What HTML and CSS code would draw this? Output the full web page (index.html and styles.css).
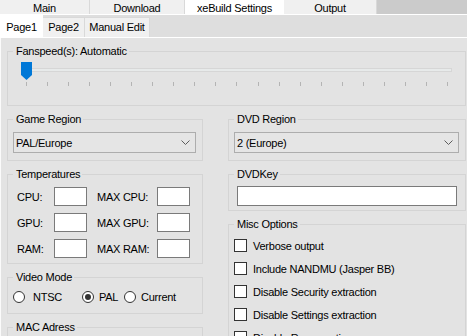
FILE: index.html
```html
<!DOCTYPE html>
<html>
<head>
    <link rel="stylesheet" href="styles.css">
</head>
<body>
    <!-- top tabs -->
    <div class="main-tabs">
        <div class="main-tab tab-main">Main</div>
        <div class="main-tab tab-download">Download</div>
        <div class="main-tab tab-xebuild active">xeBuild Settings</div>
        <div class="main-tab tab-output">Output</div>
    </div>

    <!-- settings pages -->
    <div class="page-tabs">
        <div class="page-tab tab-page1 active">Page1</div>
        <div class="page-tab tab-page2">Page2</div>
        <div class="page-tab tab-manual">Manual Edit</div>
    </div>

    <div class="page">
        <fieldset class="group fan-group">
            <legend>Fanspeed(s): Automatic</legend>
            <div class="slider">
                <div class="slider-track"></div>
                <svg class="slider-thumb" width="11" height="18" viewBox="0 0 11 18">
                    <path d="M0 0 H11 V13 L5.5 18 L0 13 Z" fill="#0078d7"/>
                </svg>
                <div class="slider-ticks">
                    <span></span><span></span><span></span><span></span><span></span><span></span><span></span>
                    <span></span><span></span><span></span><span></span><span></span><span></span><span></span>
                    <span></span><span></span><span></span><span></span><span></span><span></span><span></span>
                </div>
            </div>
        </fieldset>

        <div class="columns">
            <div class="column">
                <fieldset class="group combo-group">
                    <legend>Game Region</legend>
                    <div class="combo">
                        <span>PAL/Europe</span>
                        <svg width="9" height="5" viewBox="0 0 9 5"><polyline points="0.5,0.5 4.5,4.5 8.5,0.5" fill="none" stroke="#5c5c5c"/></svg>
                    </div>
                </fieldset>

                <fieldset class="group temp-group">
                    <legend>Temperatures</legend>
                    <div class="temp-row">
                        <span class="temp-label">CPU:</span><span class="temp-box"></span>
                        <span class="temp-label max">MAX CPU:</span><span class="temp-box"></span>
                    </div>
                    <div class="temp-row">
                        <span class="temp-label">GPU:</span><span class="temp-box"></span>
                        <span class="temp-label max">MAX GPU:</span><span class="temp-box"></span>
                    </div>
                    <div class="temp-row">
                        <span class="temp-label">RAM:</span><span class="temp-box"></span>
                        <span class="temp-label max">MAX RAM:</span><span class="temp-box"></span>
                    </div>
                </fieldset>

                <fieldset class="group video-group">
                    <legend>Video Mode</legend>
                    <div class="radios">
                        <label class="radio radio-ntsc"><span class="radio-dot"></span>NTSC</label>
                        <label class="radio radio-pal"><span class="radio-dot checked"></span>PAL</label>
                        <label class="radio"><span class="radio-dot"></span>Current</label>
                    </div>
                </fieldset>

                <fieldset class="group mac-group">
                    <legend>MAC Adress</legend>
                    <div class="textbox"></div>
                </fieldset>
            </div>

            <div class="column">
                <fieldset class="group combo-group">
                    <legend>DVD Region</legend>
                    <div class="combo">
                        <span>2 (Europe)</span>
                        <svg width="9" height="5" viewBox="0 0 9 5"><polyline points="0.5,0.5 4.5,4.5 8.5,0.5" fill="none" stroke="#5c5c5c"/></svg>
                    </div>
                </fieldset>

                <fieldset class="group key-group">
                    <legend>DVDKey</legend>
                    <div class="textbox key-box"></div>
                </fieldset>

                <fieldset class="group misc-group">
                    <legend>Misc Options</legend>
                    <label class="check"><span class="check-box"></span>Verbose output</label>
                    <label class="check"><span class="check-box"></span>Include NANDMU (Jasper BB)</label>
                    <label class="check"><span class="check-box"></span>Disable Security extraction</label>
                    <label class="check"><span class="check-box"></span>Disable Settings extraction</label>
                    <label class="check"><span class="check-box"></span>Disable Reencryption</label>
                </fieldset>
            </div>
        </div>
    </div>
</body>
</html>
```

FILE: styles.css
```css
* {
    box-sizing: border-box;
}

body {
    margin: 0;
    width: 467px;
    height: 336px;
    overflow: hidden;
    background: #e3e3e3;
    font-family: "Liberation Sans", Arial, sans-serif;
    font-size: 11px;
    letter-spacing: -0.25px;
    color: #000;
}

/* top tabs */
.main-tabs {
    display: flex;
    align-items: flex-start;
    height: 15px;
    background: #cbcbcb;
    border-bottom: 1px solid #fff;
}

.main-tab {
    height: 14px;
    line-height: 16px;
    text-align: center;
    background: #f0f0f0;
    border-right: 1px solid #d9d9d9;
}

.main-tab.active {
    height: 15px;
    margin-bottom: -1px;
    background: #fff;
    border-right: none;
}

.tab-main { width: 90px; }
.tab-download { width: 95px; }
.tab-xebuild { width: 99px; }
.tab-output { width: 93px; }

/* page tabs */
.page-tabs {
    display: flex;
    align-items: flex-start;
    height: 23px;
    background: #dedede;
    border-bottom: 1px solid #fff;
}

.page-tab {
    height: 20px;
    margin-top: 2px;
    line-height: 19px;
    text-align: center;
    background: #f0f0f0;
    border: 1px solid #d9d9d9;
    border-bottom: none;
    border-left: none;
}

.page-tab.active {
    height: 23px;
    margin-top: 0;
    line-height: 25px;
    background: #fff;
    border: none;
}

.tab-page1 { width: 43px; }
.tab-page2 { width: 42px; }
.tab-manual { width: 65px; }

.page {
    height: 298px;
    border-left: 1px solid #fbfbfb;
    padding: 7px 1px 0 6px;
}

/* group boxes */
.group {
    margin: 0;
    padding: 6px 6px 7px 5px;
    border: 1px solid #d4d4d4;
    min-width: 0;
}

.group legend {
    padding: 0 2px 0 3px;
    line-height: 13px;
}

.fan-group {
    padding: 4px 6px 19px 5px;
}

/* slider */
.slider {
    position: relative;
    width: 432px;
    height: 24px;
    margin-left: 8px;
    padding-top: 6px;
}

.slider-track {
    width: 425px;
    height: 4px;
    margin-left: 6px;
    background: #e7eaea;
    border: 1px solid #d6d6d6;
}

.slider-thumb {
    position: absolute;
    top: 0;
    left: 0;
}

.slider-ticks {
    display: flex;
    justify-content: space-between;
    width: 422px;
    height: 4px;
    margin: 10px 0 0 5px;
}

.slider-ticks span {
    width: 1px;
    background: #b4b4b4;
}

/* two columns */
.columns {
    display: grid;
    grid-template-columns: 196px 238px;
    column-gap: 25px;
    align-items: start;
    margin-top: 7px;
}

.column {
    display: flex;
    flex-direction: column;
    gap: 7px;
}

.combo {
    display: flex;
    align-items: center;
    justify-content: space-between;
    height: 21px;
    padding: 0 5px 0 2px;
    background: #e5e5e5;
    border: 1px solid #adadad;
}

/* temperatures */
.temp-group {
    padding-bottom: 5px;
}

.temp-row {
    display: flex;
    align-items: center;
    height: 19px;
    margin-bottom: 7px;
}

.temp-row:last-child {
    margin-bottom: 0;
}

.temp-label {
    width: 41px;
    padding-left: 4px;
}

.temp-label.max {
    width: 70px;
    padding-left: 10px;
}

.temp-box,
.textbox {
    display: block;
    background: #fff;
    border: 1px solid #7a7a7a;
}

.temp-box {
    width: 33px;
    height: 19px;
}

/* video mode */
.video-group {
    padding-bottom: 9px;
}

.radios {
    display: flex;
    align-items: center;
    height: 14px;
}

.radio {
    display: flex;
    align-items: center;
    gap: 5px;
}

.radio-ntsc {
    width: 69px;
    gap: 8px;
}

.radio-pal {
    width: 42px;
}

.radio-dot {
    display: flex;
    align-items: center;
    justify-content: center;
    width: 12px;
    height: 12px;
    background: #fff;
    border: 1px solid #333;
    border-radius: 50%;
}

.radio-dot.checked::after {
    content: "";
    width: 6px;
    height: 6px;
    border-radius: 50%;
    background: #333;
}

.mac-group .textbox {
    height: 20px;
}

/* right column */
.key-group {
    padding: 5px 6px 4px 5px;
}

.key-box {
    width: 220px;
    height: 20px;
    margin-left: 3px;
}

.misc-group {
    padding-top: 8px;
}

.check {
    display: flex;
    align-items: center;
    gap: 6px;
    height: 13px;
    margin-bottom: 10px;
}

.check-box {
    width: 13px;
    height: 13px;
    background: #fff;
    border: 1px solid #333;
}
```
